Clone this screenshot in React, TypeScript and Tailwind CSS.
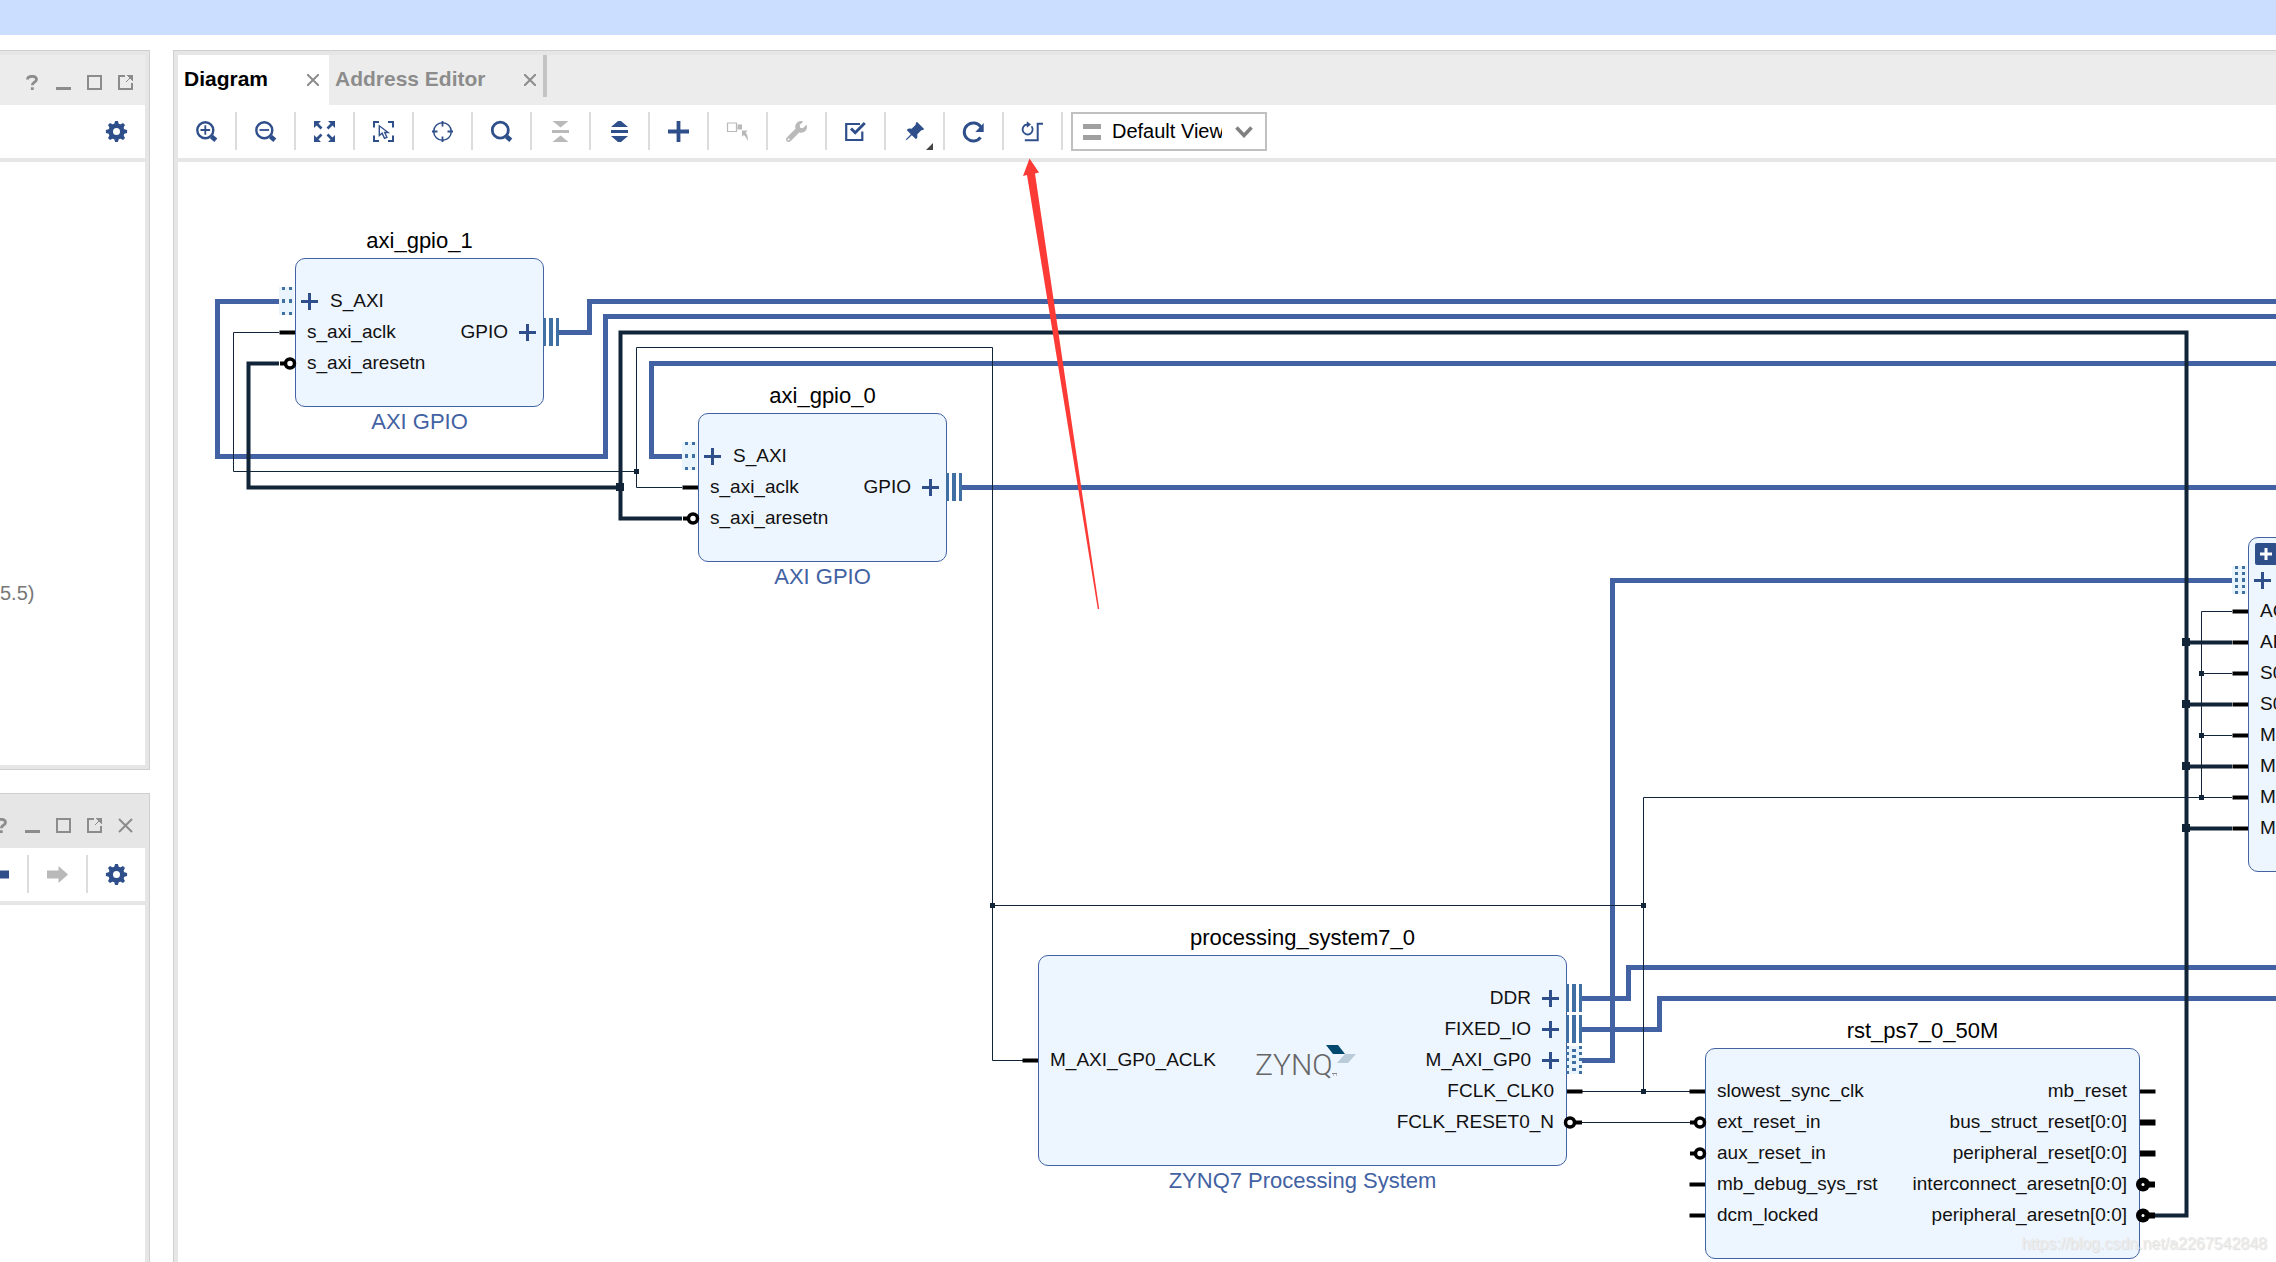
import type { ReactNode } from "react";
import { BsPinAngleFill } from "react-icons/bs";
import { FaWrench } from "react-icons/fa";

type PortKind = "pin" | "inverted" | "wide" | "wideInverted" | "target" | "targetFull" | "initiator" | "initiatorDashed";

type Port = { label: string; kind: PortKind } | null;

type Block = {
  name?: string;
  type?: string;
  x: number;
  y: number;
  w: number;
  h: number;
  left: Port[];
  right: Port[];
  logo?: boolean;
  group?: boolean;
};

// scroll offset of the canvas
const pan = { x: -178, y: -162 };

const gpioLeft: Port[] = [
  { label: "S_AXI", kind: "target" },
  { label: "s_axi_aclk", kind: "pin" },
  { label: "s_axi_aresetn", kind: "inverted" },
];
const gpioRight: Port[] = [null, { label: "GPIO", kind: "initiator" }];

const blocks: Block[] = [
  { name: "axi_gpio_1", type: "AXI GPIO", x: 295, y: 258, w: 249, h: 149, left: gpioLeft, right: gpioRight },
  { name: "axi_gpio_0", type: "AXI GPIO", x: 698, y: 413, w: 249, h: 149, left: gpioLeft, right: gpioRight },
  {
    name: "processing_system7_0",
    type: "ZYNQ7 Processing System",
    x: 1038,
    y: 955,
    w: 529,
    h: 211,
    logo: true,
    left: [null, null, { label: "M_AXI_GP0_ACLK", kind: "pin" }],
    right: [
      { label: "DDR", kind: "initiator" },
      { label: "FIXED_IO", kind: "initiator" },
      { label: "M_AXI_GP0", kind: "initiatorDashed" },
      { label: "FCLK_CLK0", kind: "pin" },
      { label: "FCLK_RESET0_N", kind: "inverted" },
    ],
  },
  {
    name: "rst_ps7_0_50M",
    x: 1705,
    y: 1048,
    w: 435,
    h: 211,
    left: [
      { label: "slowest_sync_clk", kind: "pin" },
      { label: "ext_reset_in", kind: "inverted" },
      { label: "aux_reset_in", kind: "inverted" },
      { label: "mb_debug_sys_rst", kind: "pin" },
      { label: "dcm_locked", kind: "pin" },
    ],
    right: [
      { label: "mb_reset", kind: "pin" },
      { label: "bus_struct_reset[0:0]", kind: "wide" },
      { label: "peripheral_reset[0:0]", kind: "wide" },
      { label: "interconnect_aresetn[0:0]", kind: "wideInverted" },
      { label: "peripheral_aresetn[0:0]", kind: "wideInverted" },
    ],
  },
  {
    x: 2248,
    y: 537,
    w: 280,
    h: 335,
    group: true,
    left: [
      { label: "", kind: "targetFull" },
      { label: "ACLK", kind: "pin" },
      { label: "ARESETN", kind: "pin" },
      { label: "S00_ACLK", kind: "pin" },
      { label: "S00_ARESETN", kind: "pin" },
      { label: "M00_ACLK", kind: "pin" },
      { label: "M00_ARESETN", kind: "pin" },
      { label: "M01_ACLK", kind: "pin" },
      { label: "M01_ARESETN", kind: "pin" },
    ],
    right: [],
  },
];

const busWires = [
  "M279 301.5H217.5V456.5H605.5V316.5H4000",
  "M559 332.5H589.5V301.5H4000",
  "M682 456.5H651.5V363.5H4000",
  "M962 487.5H4000",
  "M1582 998.5H1628.5V967.5H4000",
  "M1582 1029.5H1659.5V998.5H4000",
  "M1582 1060.5H1612.5V580.5H2232",
];

const resetWires = [
  "M279 363.5H248.5V487.5H620.5",
  "M682 518.5H620.5V332.5H2186.5V1215.5H2155",
  "M2186.5 642.5H2232M2186.5 704.5H2232M2186.5 766.5H2232M2186.5 828.5H2232",
];

const clockWires = [
  "M279 332.5H233.5V471.5H636.5",
  "M682 487.5H636.5V347.5H992.5V1060.5H1023",
  "M992.5 905.5H1643.5",
  "M1690 1091.5H1582M1643.5 1091.5V797.5H2232",
  "M1582 1122.5H1690",
  "M2201.5 797.5V611.5H2232M2201.5 673.5H2232M2201.5 735.5H2232",
];

const resetDots = [[620, 487], [2186, 642], [2186, 704], [2186, 766], [2186, 828]];
const clockDots = [[636.5, 471.5], [992.5, 905.5], [1643.5, 905.5], [1643.5, 1091.5], [2201.5, 673.5], [2201.5, 735.5], [2201.5, 797.5]];

function Wires() {
  return (
    <svg className="absolute inset-0 h-full w-full" aria-hidden="true">
      <g transform={`translate(${pan.x} ${pan.y})`} fill="none">
        {busWires.map((d) => <path key={d} d={d} stroke="#4262a3" strokeWidth="5" />)}
        {resetWires.map((d) => <path key={d} d={d} stroke="#112438" strokeWidth="4" />)}
        {clockWires.map((d) => <path key={d} d={d} stroke="#112438" />)}
        {resetDots.map(([x, y]) => <rect key={`${x}-${y}`} x={x - 4} y={y - 4} width="8" height="8" fill="#112438" />)}
        {clockDots.map(([x, y]) => <rect key={`${x}-${y}`} x={x - 2.5} y={y - 2.5} width="5" height="5" fill="#112438" />)}
      </g>
    </svg>
  );
}

// x is the block's edge on the given side, y the centre of the port row
function PortMark({ kind, side, x, y }: { kind: PortKind; side: "left" | "right"; x: number; y: number }) {
  const dir = side === "left" ? -1 : 1;

  if (kind === "target" || kind === "targetFull") {
    const rows = kind === "target" ? [[0, 3], [12, 4], [25, 3]] : [[0, 3], [6, 3], [12, 4], [19, 3], [25, 3]];
    return (
      <g transform={`translate(${x - 16} ${y - 14.5})`}>
        <rect width="15" height="28" fill="#e9f4fd" />
        {rows.map(([top, h]) => (
          <path key={top} d={`M3 ${top}h3v${h}h-3zM10 ${top}h3v${h}h-3z`} fill="#3f6fa3" />
        ))}
      </g>
    );
  }
  if (kind === "initiator") {
    return (
      <g transform={`translate(${x} ${y - 14.5})`}>
        <path d="M-1 0H2V28H-1zM5 0H9V28H5zM12 0H15V28H12z" fill="#3f6fa3" />
      </g>
    );
  }
  if (kind === "initiatorDashed") {
    return (
      <g transform={`translate(${x} ${y - 14.5})`} fill="#3f6fa3">
        <rect width="15" height="28" fill="#e9f4fd" />
        {[0, 6, 12, 19, 25].map((t) => <path key={t} d={`M-1 ${t}h3v3h-3zM12 ${t}h3v3h-3z`} />)}
        {[3, 9, 15, 22].map((t) => <path key={t} d={`M5 ${t}h4v3h-4z`} />)}
      </g>
    );
  }
  if (kind === "inverted") {
    return (
      <g stroke="#000">
        <path d={`M${x + dir * 8} ${y}H${x + dir * 15}`} strokeWidth="4" />
        <circle cx={side === "left" ? x - 5 : x + 3} cy={y} r="4.5" fill="#fff" strokeWidth="3.5" />
      </g>
    );
  }
  if (kind === "wideInverted") {
    return (
      <g>
        <path d={`M${x + 6} ${y}H${x + 15}`} stroke="#000" strokeWidth="6" />
        <circle cx={x + 3} cy={y} r="7" />
        <circle cx={x + 3} cy={y} r="1.5" fill="#fff" />
      </g>
    );
  }
  return <path d={`M${x} ${y}H${x + dir * 15.5}`} stroke="#000" strokeWidth={kind === "wide" ? 6 : 4} />;
}

function PortMarks() {
  return (
    <svg className="absolute inset-0 h-full w-full" aria-hidden="true">
      <g transform={`translate(${pan.x} ${pan.y})`}>
        {blocks.map((b) => (
          <g key={b.x}>
            {b.left.map((p, i) => p && <PortMark key={i} kind={p.kind} side="left" x={b.x} y={b.y + 43.5 + i * 31} />)}
            {b.right.map((p, i) => p && <PortMark key={i} kind={p.kind} side="right" x={b.x + b.w} y={b.y + 43.5 + i * 31} />)}
          </g>
        ))}
      </g>
    </svg>
  );
}

function ExpandMark() {
  return (
    <svg width="17" height="17" className="shrink-0" aria-hidden="true">
      <path d="M0 8.5H17M8.5 0V17" stroke="#2f4f8b" strokeWidth="3" />
    </svg>
  );
}

function PortRow({ port, side }: { port: Port; side: "left" | "right" }) {
  if (!port) return <li className="h-[31px]" />;
  const isInterface = /target|initiator/.test(port.kind);
  if (side === "left") {
    return (
      <li className={isInterface ? "flex h-[31px] items-center gap-3 pl-[5px]" : "flex h-[31px] items-center pl-[11px]"}>
        {isInterface && <ExpandMark />}
        {port.label && <span className="pb-[2px]">{port.label}</span>}
      </li>
    );
  }
  return (
    <li className={isInterface ? "flex h-[31px] items-center justify-end gap-[11px] pr-[7px]" : "flex h-[31px] items-center justify-end pr-3"}>
      <span className="pb-[2px]">{port.label}</span>
      {isInterface && <ExpandMark />}
    </li>
  );
}

function ZynqLogo() {
  return (
    <svg width="102" height="42" viewBox="0 -4 102 42" className="shrink-0">
      <text x="0" y="31" fontFamily="Roboto, sans-serif" fontWeight="300" fontSize="30" fill="#666">ZYNQ</text>
      <path d="M77 29.5h5M78 31h1M81 31h1" stroke="#888" />
      <path d="M71 1H83L90 10H78z" fill="#00496e" />
      <path d="M90 10H101L93 19H82z" fill="#b9cad8" />
    </svg>
  );
}

function BlockNode({ block }: { block: Block }) {
  return (
    <section
      className="absolute flex flex-col items-center"
      style={{ left: block.x + pan.x, top: block.y + pan.y - 32, width: block.w }}
    >
      <h3 className="h-8 text-[22px] leading-[30px] whitespace-nowrap text-black">{block.name}</h3>
      <div
        className="relative flex w-full items-start justify-between rounded-[10px] border border-[#4262a3] bg-[#edf5ff] pt-[27px] text-[19px] leading-[29px] whitespace-nowrap text-[#111]"
        style={{ height: block.h }}
      >
        {block.group && (
          <button type="button" aria-label="Expand hierarchy" className="absolute top-[5px] left-[6px] flex size-[22px] items-center justify-center rounded-xs bg-[#2f4f8b]">
            <svg width="12" height="12"><path d="M0 6H12M6 0V12" stroke="#fff" strokeWidth="3" /></svg>
          </button>
        )}
        <ul>{block.left.map((p, i) => <PortRow key={i} port={p} side="left" />)}</ul>
        {block.logo && <div className="flex h-[155px] items-center"><ZynqLogo /></div>}
        <ul>{block.right.map((p, i) => <PortRow key={i} port={p} side="right" />)}</ul>
      </div>
      {block.type && <p className="text-[22px] leading-[30px] whitespace-nowrap text-[#4262a3]">{block.type}</p>}
    </section>
  );
}

function Icon({ children }: { children: ReactNode }) {
  return (
    <svg width="23" height="23" viewBox="0.5 0.5 23 23" fill="none" stroke="currentColor" strokeWidth="2" aria-hidden="true">
      {children}
    </svg>
  );
}

function Gear() {
  return (
    <Icon>
      <circle cx="12" cy="12" r="5.8" strokeWidth="4.6" />
      {[0, 45, 90, 135, 180, 225, 270, 315].map((a) => (
        <path key={a} d="M9.6 5L10.6 1.4H13.4L14.4 5z" fill="currentColor" stroke="none" transform={`rotate(${a} 12 12)`} />
      ))}
    </Icon>
  );
}

function Lens({ sign, weight = 2.4 }: { sign?: string; weight?: number }) {
  return (
    <Icon>
      <circle cx="10.8" cy="10.7" r="8" strokeWidth={weight} />
      <path d="M17 17L21.3 20.8" strokeWidth="4.5" />
      {sign && <path d={sign} strokeWidth="1.8" />}
    </Icon>
  );
}

function Arrows() {
  return (
    <Icon>
      {[0, 90, 180, 270].map((a) => (
        <g key={a} transform={`rotate(${a} 12 12)`}>
          <path d="M1.5 1.5H8.5L1.5 8.5z" fill="currentColor" stroke="none" />
          <path d="M4 4L9 9" strokeWidth="2.6" />
        </g>
      ))}
    </Icon>
  );
}

const tools: { label: string; icon: ReactNode; disabled?: boolean; menu?: boolean }[] = [
  { label: "Zoom In", icon: <Lens sign="M6 10.5H15.6M10.8 5.7V15.3" /> },
  { label: "Zoom Out", icon: <Lens sign="M6 10.5H15.6" /> },
  { label: "Zoom Fit", icon: <Arrows /> },
  {
    label: "Select Area",
    icon: (
      <Icon>
        <path d="M2.5 8V2.5H7.5M16.5 2.5H21.5V8M21.5 16V21.5H16.5M7.5 21.5H2.5V16" />
        <path d="M7.8 6.3V16L10.6 13.6L13 18.8L15.4 17.8L13.2 13H16.6z" strokeWidth="1.4" />
      </Icon>
    ),
  },
  {
    label: "Fit Selection",
    icon: (
      <Icon>
        <circle cx="12" cy="12" r="8.8" strokeWidth="1.5" />
        <path d="M12 1.5V7M12 17V22.5M1.5 12H7M17 12H22.5" strokeWidth="1.8" />
      </Icon>
    ),
  },
  { label: "Search", icon: <Lens weight={2.8} /> },
  {
    label: "Collapse All",
    disabled: true,
    icon: (
      <Icon>
        <path d="M4 1.5H20L12 8zM3.5 10.5H20.5V13.5H3.5zM4 22.5H20L12 16z" fill="currentColor" stroke="none" />
      </Icon>
    ),
  },
  {
    label: "Expand All",
    icon: (
      <Icon>
        <path d="M3.5 7.5L10.5 1.5H13.5L20.5 7.5zM3.5 10.5H20.5V13.5H3.5zM3.5 16.5L10.5 22.5H13.5L20.5 16.5z" fill="currentColor" stroke="none" />
      </Icon>
    ),
  },
  { label: "Add IP", icon: <Icon><path d="M1.5 12H22.5M12 1.5V22.5" strokeWidth="3.8" /></Icon> },
  {
    label: "Make External",
    disabled: true,
    icon: (
      <Icon>
        <path d="M2 3.5H11V12H2z" strokeWidth="1.2" />
        <path d="M12 5H16.5V10H12zM16.5 11H22L20.3 13C22 15.5 22.8 18.5 22 21.5C21.3 19 20.2 17.2 18.4 15.4L16.5 17.2z" fill="currentColor" stroke="none" />
      </Icon>
    ),
  },
  { label: "Customize Block", disabled: true, icon: <FaWrench size={21} /> },
  {
    label: "Validate Design",
    icon: (
      <Icon>
        <path d="M16.5 4.5H2.7V20.5H18.8V12" strokeWidth="2.2" />
        <path d="M7.5 9L11.7 13.2L21.3 3.5" strokeWidth="3" />
      </Icon>
    ),
  },
  { label: "Pin Blocks", menu: true, icon: <BsPinAngleFill size={21} /> },
  {
    label: "Refresh",
    icon: (
      <Icon>
        <path d="M19 17.8A9 9 0 1 1 19.3 7.5" strokeWidth="3" />
        <path d="M22.2 3.5V12.5H13.8z" fill="currentColor" stroke="none" />
      </Icon>
    ),
  },
  {
    label: "Regenerate Layout",
    icon: (
      <Icon>
        <path d="M22.5 4.3H17.2V20.7H4.3" />
        <path d="M11 6.8A5 5 0 1 1 6.5 5" strokeWidth="1.8" />
        <path d="M6.3 1.8L10.5 5L6.3 8.2z" fill="currentColor" stroke="none" />
      </Icon>
    ),
  },
];

const windowIcons = {
  Help: <path d="M2.5 4.5C2.5 0.5 11.5 0 11.5 4.5C11.5 7.3 7.3 7 7.3 10.3M7.3 12.3V15" strokeWidth="2.8" />,
  Minimize: <path d="M0 13.5H15" strokeWidth="3" />,
  Maximize: <path d="M1 1H14V14H1z" />,
  Float: (
    <>
      <path d="M7 1H1V14H14V8" />
      <path d="M15 0V6L9 0zM8 7L13 2" fill="currentColor" strokeWidth="1" />
    </>
  ),
  Close: <path d="M1 1L14 14M14 1L1 14" />,
};

function WindowButtons({ names }: { names: (keyof typeof windowIcons)[] }) {
  return (
    <>
      {names.map((name) => (
        <button key={name} type="button" aria-label={name} className="shrink-0 text-[#8c8c8c]">
          <svg width="15" height="15" fill="none" stroke="currentColor" strokeWidth="2" aria-hidden="true">
            {windowIcons[name]}
          </svg>
        </button>
      ))}
    </>
  );
}

function ToolButton({ label, disabled, children }: { label: string; disabled?: boolean; children: ReactNode }) {
  return (
    <button
      type="button"
      aria-label={label}
      disabled={disabled}
      className="relative flex h-[39px] w-[57px] shrink-0 items-center justify-center text-[#2f4f8b] disabled:text-[#b9b9b9]"
    >
      {children}
    </button>
  );
}

function Separator() {
  return <span className="h-[38px] w-[2px] shrink-0 bg-[#dcdcdc]" />;
}

function SourcesPanel() {
  return (
    <section className="flex min-h-0 flex-[720] flex-col border border-l-0 border-[#cfcfcf]">
      <div className="flex min-h-0 flex-1 flex-col overflow-hidden border-4 border-l-0 border-[#e6e6e6]">
        <header className="flex h-[50px] shrink-0 items-center justify-end gap-4 bg-[#ececec] pt-[5px] pr-3">
          <WindowButtons names={["Help", "Minimize", "Maximize", "Float"]} />
        </header>
        <div className="flex h-[57px] shrink-0 items-start justify-end border-b-4 border-[#e6e6e6] pt-[7px]">
          <ToolButton label="Settings"><Gear /></ToolButton>
        </div>
        <div className="flex flex-1 items-end pb-40">
          <p className="text-[20px] leading-6 text-[#777]">5.5)</p>
        </div>
      </div>
    </section>
  );
}

function PropertiesPanel() {
  return (
    <section className="flex min-h-0 flex-[469] flex-col border border-b-0 border-l-0 border-[#cfcfcf]">
      <div className="flex min-h-0 flex-1 flex-col overflow-hidden border-r-4 border-[#e6e6e6]">
        <header className="flex h-[54px] shrink-0 items-center justify-end gap-4 bg-[#e6e6e6] pt-[9px] pr-3">
          <WindowButtons names={["Help", "Minimize", "Maximize", "Float", "Close"]} />
        </header>
        <div className="flex h-[57px] shrink-0 items-start justify-end border-b-4 border-[#e6e6e6] pt-[7px]">
          <ToolButton label="Back">
            <Icon><path d="M1.5 12L11 3.5V8H22.5V16H11V20.5z" fill="currentColor" stroke="none" /></Icon>
          </ToolButton>
          <Separator />
          <ToolButton label="Forward" disabled>
            <Icon><path d="M22.5 12L13 3.5V8H1.5V16H13V20.5z" fill="currentColor" stroke="none" /></Icon>
          </ToolButton>
          <Separator />
          <ToolButton label="Settings"><Gear /></ToolButton>
        </div>
      </div>
    </section>
  );
}

function TabClose({ label }: { label: string }) {
  return (
    <button type="button" aria-label={label} className="text-[#8c8c8c]">
      <svg width="12" height="12" aria-hidden="true"><path d="M0 0L12 12M12 0L0 12" stroke="currentColor" strokeWidth="2" /></svg>
    </button>
  );
}

function Tabs() {
  return (
    <nav className="flex h-[50px] shrink-0 items-start bg-[#ececec] text-[21px] font-bold whitespace-nowrap">
      <div className="flex h-full w-[151px] items-center justify-between bg-white pr-[10px] pl-[6px]">
        <button type="button" className="pb-[2px] text-black">Diagram</button>
        <TabClose label="Close Diagram" />
      </div>
      <div className="flex h-full w-[214px] items-center justify-between pr-[7px] pl-[6px] text-[#8c8c8c]">
        <button type="button" className="pb-[2px]">Address Editor</button>
        <TabClose label="Close Address Editor" />
      </div>
      <span className="h-[42px] w-1 bg-[#c4c4c4]" />
    </nav>
  );
}

function Toolbar() {
  return (
    <div className="flex h-[57px] shrink-0 items-start border-b-4 border-[#e6e6e6] pt-[7px]">
      {tools.map((tool) => (
        <div key={tool.label} className="flex">
          <ToolButton label={tool.label} disabled={tool.disabled}>
            {tool.icon}
            {tool.menu && (
              <svg width="7" height="7" className="absolute right-[10px] bottom-px"><path d="M7 0V7H0z" fill="#444" /></svg>
            )}
          </ToolButton>
          <Separator />
        </div>
      ))}
      <label className="ml-[8px] flex h-[39px] w-[196px] items-center border-2 border-[#c0c0c0] pl-[10px]">
        <svg width="18" height="16" className="shrink-0" aria-hidden="true">
          <path d="M0 2.5H18M0 13.5H18" stroke="#a0a0a0" strokeWidth="5" />
        </svg>
        <select aria-label="View" className="ml-[11px] h-[30px] w-[110px] appearance-none overflow-hidden bg-transparent pb-[2px] text-[20px] leading-6 text-black">
          <option>Default View</option>
        </select>
        <svg width="18" height="12" className="ml-[13px] shrink-0" aria-hidden="true">
          <path d="M1.5 1.5L9 9.5L16.5 1.5" fill="none" stroke="#808080" strokeWidth="3.5" />
        </svg>
      </label>
    </div>
  );
}

function Canvas() {
  return (
    <main className="relative min-h-0 flex-1">
      <div className="absolute inset-0 overflow-hidden">
        <Wires />
        {blocks.map((b) => <BlockNode key={b.x} block={b} />)}
        <PortMarks />
        <p className="absolute right-[9px] bottom-[6px] text-[16px] leading-6 text-[#ececec] [text-shadow:1px_1px_1px_#dcdcdc]">
          https://blog.csdn.net/a2267542848
        </p>
      </div>
      <svg className="pointer-events-none absolute inset-0 h-full w-full overflow-visible" aria-hidden="true">
        <path
          d="M1029.5 158.5L1039 172.5L1035 173.5L1099.2 609L1097.8 609L1027 175L1023 176z"
          fill="#fc3a36"
          transform={`translate(${pan.x} ${pan.y})`}
        />
      </svg>
    </main>
  );
}

export default function App() {
  return (
    <div className="flex h-screen flex-col overflow-hidden bg-white font-['Liberation_Sans',Arial,sans-serif]">
      <div className="h-[35px] shrink-0 bg-[#cbdeff]" />
      <div className="flex min-h-0 flex-1 gap-[23px] pt-[15px]">
        <aside className="flex w-[150px] shrink-0 flex-col gap-[23px]">
          <SourcesPanel />
          <PropertiesPanel />
        </aside>
        <section className="flex min-w-0 flex-1 flex-col border-t border-l border-[#cfcfcf]">
          <div className="flex min-h-0 flex-1 flex-col border-t-4 border-l-4 border-[#e6e6e6]">
            <Tabs />
            <Toolbar />
            <Canvas />
          </div>
        </section>
      </div>
    </div>
  );
}
